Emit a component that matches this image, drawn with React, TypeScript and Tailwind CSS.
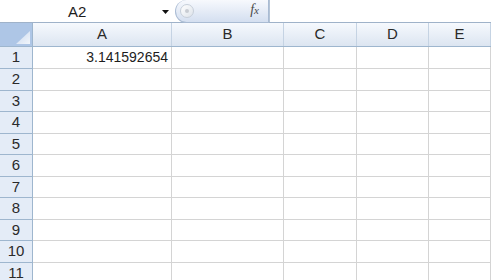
import React from "react";

const cols = [
  { name: "A", w: "w-[139px]" },
  { name: "B", w: "w-[112px]" },
  { name: "C", w: "w-[73px]" },
  { name: "D", w: "w-[72px]" },
  { name: "E", w: "flex-1" },
];

const rowHeights = [
  "h-[22px]",
  "h-[22px]",
  "h-[21px]",
  "h-[22px]",
  "h-[21px]",
  "h-[22px]",
  "h-[21px]",
  "h-[22px]",
  "h-[21px]",
  "h-[22px]",
  "h-[22px]",
];

export default function App() {
  return (
    <div
      className="w-[491px] h-[280px] overflow-hidden bg-white text-[#1d1d1d]"
      style={{ fontFamily: '"Liberation Sans", Arial, sans-serif' }}
    >
      {/* Top bar */}
      <div className="flex h-[23px] items-stretch bg-white border-b border-[#9fb2c9]">
        <div className="relative w-[175px] flex items-center">
          <span className="ml-[68px] text-[15px] leading-none">A2</span>
          <svg className="absolute left-[162px] top-[10px]" width="7" height="4" viewBox="0 0 7 4">
            <path d="M0 0 H7 L3.5 4 Z" fill="#111" />
          </svg>
        </div>
        <div className="relative w-[94px] h-[23px] rounded-l-full rounded-r-none border border-t-0 border-[#a9bbd3] bg-gradient-to-b from-[#f7f9fd] to-[#d4dff0] flex items-center">
          <div className="ml-[4px] w-[14px] h-[14px] rounded-full border border-[#c7cfd9] bg-gradient-to-br from-[#ffffff] to-[#dde3ea] flex items-center justify-center">
            <div className="w-[4px] h-[4px] rounded-full bg-[#c8ccd2]" />
          </div>
          <span
            className="absolute right-[9px] top-[3px] text-[14px] italic text-[#4a4a4a] leading-none"
            style={{ fontFamily: '"Liberation Serif", "Times New Roman", serif' }}
          >
            f<span className="text-[11px]">x</span>
          </span>
        </div>
        <div className="flex-1 border-l border-[#b5c4d6]" />
      </div>

      {/* Column header */}
      <div className="flex h-[24px] border-b border-[#9eb6ce]">
        <div className="relative w-[33px] bg-[#aec6e6] border-r border-[#9eb6ce]">
          <svg className="absolute right-[2px] bottom-[2px]" width="14" height="13" viewBox="0 0 14 13">
            <defs>
              <linearGradient id="tri" x1="0" y1="0" x2="1" y2="1">
                <stop offset="0" stopColor="#c9d8ee" />
                <stop offset="1" stopColor="#f2f6fb" />
              </linearGradient>
            </defs>
            <path d="M14 0 V13 H0 Z" fill="url(#tri)" />
          </svg>
        </div>
        {cols.map((c) => (
          <div
            key={c.name}
            className={`${c.w} flex items-center justify-center border-r border-[#c5d3e3] bg-gradient-to-b from-[#f6f9fd] to-[#dce5f1] text-[15px] text-[#2a2a2a]`}
          >
            {c.name}
          </div>
        ))}
      </div>

      {/* Rows */}
      {rowHeights.map((h, i) => (
        <div key={i} className={`flex ${h}`}>
          <div className="w-[33px] flex items-center justify-center bg-[#e4ecf7] border-r border-b border-[#9eb6ce] text-[15px] text-[#2a2a2a]">
            {i + 1}
          </div>
          {cols.map((c) => (
            <div
              key={c.name}
              className={`${c.w} flex items-center justify-end pr-[3px] border-r border-b border-[#d4d4d4] text-[14px]`}
            >
              {i === 0 && c.name === "A" ? "3.141592654" : ""}
            </div>
          ))}
        </div>
      ))}
    </div>
  );
}
